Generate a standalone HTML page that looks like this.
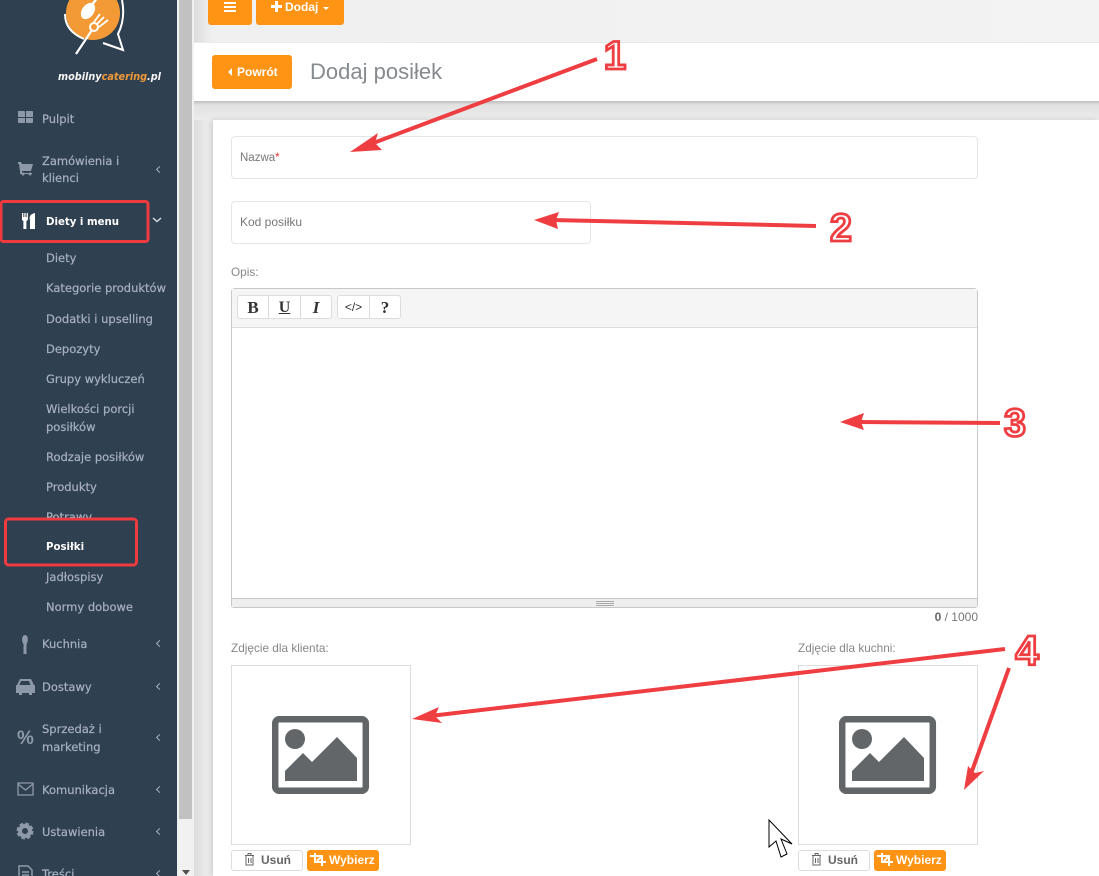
<!DOCTYPE html>
<html><head><meta charset="utf-8"><style>
*{box-sizing:border-box}
html,body{margin:0;padding:0;overflow:hidden}
body{width:1099px;height:876px;overflow:hidden;position:relative;background:#f3f3f3;font-family:"Liberation Sans",sans-serif;color:#777}
.a{position:absolute}
.s{position:absolute;font-family:"DejaVu Sans",sans-serif;font-size:11.5px;color:#a7b1c2;line-height:18px;white-space:nowrap;-webkit-text-stroke:.2px #a7b1c2}
.act{color:#fff;font-weight:bold;font-size:10.2px;-webkit-text-stroke:0}
.sub{left:46px}
.m{left:42px}
.ch{position:absolute;left:157px;width:5px;height:5px;border-left:1px solid #a7b1c2;border-bottom:1px solid #a7b1c2;transform:rotate(45deg)}
.btn{position:absolute;background:#ff9313;color:#fff;font-weight:bold;border-radius:3px;font-size:12px}
.bt{position:absolute;color:#fff;font-weight:bold;font-size:12px;line-height:14px;white-space:nowrap}
.inp{position:absolute;background:#fff;border:1px solid #e5e6e7;border-radius:4px;font-size:12px;color:#777;padding-left:8px}
.ed{position:absolute;background:#fff;height:24px;top:295px;border:1px solid #ddd;text-align:center;font-family:"Liberation Serif",serif;font-size:17px;font-weight:bold;color:#333;line-height:23px}
.lab{position:absolute;font-size:11.8px;color:#888;white-space:nowrap}
.box{position:absolute;top:665px;width:180px;height:180px;background:#fff;border:1px solid #ddd}
.ub{position:absolute;top:850px;width:72px;height:21px;background:#fff;border:1px solid #ddd;border-radius:3px;color:#666;font-size:12px;font-weight:bold;line-height:19px;padding-left:29px}
.wb{position:absolute;top:850px;width:72px;height:21px;background:#ff9313;border-radius:3px;color:#fff;font-size:12px;font-weight:bold;line-height:21px;padding-left:22px}
</style></head><body>
<div class="a" style="left:0;top:0;width:177px;height:876px;background:#2f4050"></div>
<div class="a" style="left:177px;top:0;width:17px;height:876px;background:#f1f1f1"></div>
<div class="a" style="left:179px;top:0;width:13px;height:819px;background:#c1c1c1"></div>
<div class="a" style="left:182px;top:870px;width:0;height:0;border-left:4px solid transparent;border-right:4px solid transparent;border-top:5px solid #505050"></div>
<div class="a" style="left:194px;top:0;width:905px;height:876px;background:linear-gradient(90deg,#dcdcdc,#f0f0f0 18px,#f3f3f3)"></div>

<div class="btn" style="left:208px;top:-10px;width:44px;height:35px"></div>
<div class="a" style="left:224px;top:2px;width:12px;height:2px;background:#fff;box-shadow:0 4px #fff,0 8px #fff"></div>
<div class="btn" style="left:256px;top:-10px;width:88px;height:35px"></div>
<div class="a" style="left:271px;top:5px;width:11px;height:3px;background:#fff"></div>
<div class="a" style="left:275px;top:1px;width:3px;height:11px;background:#fff"></div>
<div class="bt" style="left:285px;top:0">Dodaj</div>
<div class="a" style="left:323px;top:7px;width:0;height:0;border-left:3px solid transparent;border-right:3px solid transparent;border-top:3px solid #fff"></div>

<div class="a" style="left:194px;top:42px;width:905px;height:59px;background:#fff;border-top:1px solid #e7eaec"></div>
<div class="a" style="left:194px;top:101px;width:905px;height:19px;background:linear-gradient(#bdbdbd,#e2e2e2 4px,#ececec)"></div>
<div class="btn" style="left:212px;top:55px;width:80px;height:34px"></div>
<div class="a" style="left:228px;top:68px;width:0;height:0;border-top:4px solid transparent;border-bottom:4px solid transparent;border-right:4px solid #fff"></div>
<div class="bt" style="left:237px;top:65px">Powrót</div>
<div class="a" style="left:310px;top:59px;font-size:22px;color:#868b90;line-height:26px;white-space:nowrap">Dodaj posiłek</div>

<div class="a" style="left:213px;top:120px;width:886px;height:756px;background:#fff;box-shadow:-2px 0 5px rgba(0,0,0,.15)"></div>

<div class="inp" style="left:231px;top:136px;width:747px;height:43px;line-height:43px;font-size:11.5px">Nazwa<span style="color:#e33">*</span></div>
<div class="inp" style="left:231px;top:201px;width:360px;height:43px;line-height:41px">Kod posiłku</div>
<div class="lab" style="left:231px;top:265px">Opis:</div>

<div class="a" style="left:231px;top:288px;width:747px;height:320px;background:#fff;border:1px solid #c8c8c8;border-radius:4px 4px 3px 3px"></div>
<div class="a" style="left:232px;top:289px;width:745px;height:39px;background:#f5f5f5;border-bottom:1px solid #ddd"></div>
<div class="ed" style="left:237px;width:32px;border-radius:3px 0 0 3px">B</div>
<div class="ed" style="left:268px;width:33px;text-decoration:underline;font-size:16px">U</div>
<div class="ed" style="left:300px;width:32px;font-style:italic;border-radius:0 3px 3px 0">I</div>
<div class="ed" style="left:337px;width:33px;border-radius:3px 0 0 3px;font-family:'Liberation Sans',sans-serif;font-size:12px;font-weight:normal">&lt;/&gt;</div>
<div class="ed" style="left:369px;width:32px;border-radius:0 3px 3px 0">?</div>
<div class="a" style="left:232px;top:598px;width:745px;height:9px;background:#eee;border-top:1px solid #c8c8c8"></div>
<div class="a" style="left:596px;top:601px;width:18px;height:1px;background:#aaa;box-shadow:0 2px #aaa,0 4px #aaa"></div>
<div class="a" style="left:878px;top:610px;width:100px;text-align:right;font-size:12px;color:#777;line-height:14px"><b style="color:#666">0</b> / 1000</div>

<div class="lab" style="left:231px;top:641px">Zdjęcie dla klienta:</div>
<div class="lab" style="left:798px;top:641px">Zdjęcie dla kuchni:</div>
<div class="box" style="left:231px"></div>
<div class="box" style="left:798px"></div>
<svg class="a" style="left:272px;top:716px" width="98" height="78" viewBox="0 0 98 78"><rect x="3.2" y="3.2" width="90.6" height="71.6" rx="4" fill="none" stroke="#636668" stroke-width="6.5"/><circle cx="23" cy="23" r="10" fill="#636668"/><path d="M13 65V55L31 37 40 46 65 21 85 42V65Z" fill="#636668"/></svg>
<svg class="a" style="left:839px;top:716px" width="98" height="78" viewBox="0 0 98 78"><rect x="3.2" y="3.2" width="90.6" height="71.6" rx="4" fill="none" stroke="#636668" stroke-width="6.5"/><circle cx="23" cy="23" r="10" fill="#636668"/><path d="M13 65V55L31 37 40 46 65 21 85 42V65Z" fill="#636668"/></svg>

<div class="ub" style="left:231px">Usuń</div>
<div class="wb" style="left:307px">Wybierz</div>
<div class="ub" style="left:798px">Usuń</div>
<div class="wb" style="left:874px">Wybierz</div>
<svg class="a" style="left:0;top:0" width="1099" height="876" viewBox="0 0 1099 876">
<g fill="none" stroke="#666" stroke-width="1"><path d="M245 855.500h9M248 855v-1.500h3v1.500M246 856v9h7v-9M248.500 858v5M251 858v5M812 855.500h9M815 855v-1.500h3v1.500M813 856v9h7v-9M815.500 858v5M818 858v5"/></g>
<g fill="none" stroke="#fff" stroke-width="2"><path d="M310 856h12v10M315 853v9h11M317 861l4-4M877 856h12v10M882 853v9h11M884 861l4-4"/></g>

<!-- logo -->
<circle cx="93" cy="13" r="27" fill="#f39a36"/>
<path d="M84 39C72 34 65 26 65 14M122 0C124 10 124 22 118 34L123 50 103 43" fill="none" stroke="#fff" stroke-width="2"/>
<ellipse cx="88" cy="11" rx="6" ry="9" transform="rotate(35 88 11)" fill="#fff"/>
<path d="M92 5L97 -2" stroke="#fff" stroke-width="2.500"/>
<path d="M76 54L92 30" stroke="#fff" stroke-width="2.200"/>
<circle cx="94" cy="27" r="4" fill="none" stroke="#fff" stroke-width="2"/>
<path d="M94 22L100 14M97 24L104 17M99 27L108 20" stroke="#fff" stroke-width="1.800"/>
<text x="58" y="80" font-family="DejaVu Sans" font-size="11" font-weight="bold" font-style="italic" fill="#f5f5f5" textLength="103" lengthAdjust="spacingAndGlyphs">mobilny<tspan fill="#f39a36">catering</tspan>.pl</text>

<!-- side icons -->
<g fill="#8d99a8">
<path d="M18 111h6a1 1 0 0 1 1 1v5h-7ZM26 111h6a1 1 0 0 1 1 1v5h-7ZM18 118h7v5h-6a1 1 0 0 1-1-1ZM26 118h7v4a1 1 0 0 1-1 1h-6Z"/>
<path d="M18 162h3l1 2h11l-2 7h-9v2h10v1H20v-3l-1-7h-1Z"/><circle cx="23" cy="174" r="1.500"/><circle cx="30" cy="174" r="1.500"/>
<path d="M25 635c-3.500 0-3.500 7-1.500 9v10h3v-10c2-2 2-9-1.500-9Z"/>
<path d="M20 679h11l3 6c1 0 1 1 1 1v7h-3v2h-3v-2H22v2h-3v-2h-3v-7s0-1 1-1Zm1 2-1.500 4h11l-1.500-4Z" fill-rule="evenodd"/>
<text x="17" y="744" font-family="Liberation Sans" font-weight="bold" font-size="19">%</text>
</g>
<circle cx="25" cy="831" r="5" fill="none" stroke="#8d99a8" stroke-width="4"/>
<circle cx="25" cy="831" r="7" fill="none" stroke="#8d99a8" stroke-width="3" stroke-dasharray="3.500 2"/>
<path d="M18 783h15v12H18ZM18 784l7.500 6 7.500-6" fill="none" stroke="#8d99a8" stroke-width="1.300"/>
<path d="M19 866h9l4 4v10H19ZM22 872h7M22 875h7" fill="none" stroke="#8d99a8" stroke-width="1.500"/>
<path d="M22 213h1.300v4h1v-4h1.300v4h1v-4h1.300v7l-1.500 1v8h-3v-8l-1.400-1ZM30 229v-9c-1-3 0-6 5-7v16Z" fill="#fff"/>
<path d="M153 218l4 3.500 4-3.500" fill="none" stroke="#dfe4ed" stroke-width="1.300"/>

<!-- cursor -->
<path d="M769 820V847L776 841 781 857 787 854 781 839 792 844Z" fill="#fff" stroke="#000" stroke-width="1"/>

<!-- highlights -->
<rect x="1" y="201.500" width="147" height="40" rx="2.500" fill="none" stroke="#ef3b3f" stroke-width="3"/>
<rect x="5.500" y="519" width="131" height="46" rx="3" fill="none" stroke="#ef3b3f" stroke-width="3"/>

<!-- arrows -->
<g fill="none" stroke="#ef3e42" stroke-width="4">
<path d="M597 59L368 145"/>
<path d="M816 226L552 220"/>
<path d="M1000 423L860 422"/>
<path d="M1005 649L430 716"/>
<path d="M1009 668L972 771"/>
</g>
<g fill="#ef3e42">
<path d="M350 152L378 133 375 143 382 150Z"/>
<path d="M534 220L559 212 556 220 558 229Z"/>
<path d="M840 422L864 413 861 422 864 430Z"/>
<path d="M412 719L439 707 435 716 442 723Z"/>
<path d="M964 790L968 766 975 773 984 771Z"/>
</g>
<g font-family="Liberation Sans" font-weight="bold" fill="#fff" stroke="#ef3e42" stroke-width="2.800" text-anchor="middle">
<text x="615" y="69" font-size="40">1</text>
<text x="841" y="241" font-size="39">2</text>
<text x="1015" y="436" font-size="39">3</text>
<text x="1027" y="665" font-size="42">4</text>
</g>
</svg>

<div class="s m" style="top:110px">Pulpit</div>
<div class="s m" style="top:153px;line-height:17px">Zamówienia i<br>klienci</div><div class="ch" style="top:167px"></div>
<div class="s act" style="left:46px;top:214px">Diety i menu</div>
<div class="s sub" style="top:249px">Diety</div>
<div class="s sub" style="top:279px">Kategorie produktów</div>
<div class="s sub" style="top:310px">Dodatki i upselling</div>
<div class="s sub" style="top:340px">Depozyty</div>
<div class="s sub" style="top:370px">Grupy wykluczeń</div>
<div class="s sub" style="top:400px">Wielkości porcji<br>posiłków</div>
<div class="s sub" style="top:448px">Rodzaje posiłków</div>
<div class="s sub" style="top:478px">Produkty</div>
<div class="s sub" style="top:508px;height:10px;overflow:hidden">Potrawy</div>
<div class="s sub act" style="top:539px">Posiłki</div>
<div class="s sub" style="top:568px">Jadłospisy</div>
<div class="s sub" style="top:598px">Normy dobowe</div>
<div class="s m" style="top:635px">Kuchnia</div><div class="ch" style="top:641px"></div>
<div class="s m" style="top:678px">Dostawy</div><div class="ch" style="top:684px"></div>
<div class="s m" style="top:720px">Sprzedaż i<br>marketing</div><div class="ch" style="top:735px"></div>
<div class="s m" style="top:781px">Komunikacja</div><div class="ch" style="top:787px"></div>
<div class="s m" style="top:823px">Ustawienia</div><div class="ch" style="top:829px"></div>
<div class="s m" style="top:865px">Treści</div><div class="ch" style="top:871px"></div>
</body></html>
